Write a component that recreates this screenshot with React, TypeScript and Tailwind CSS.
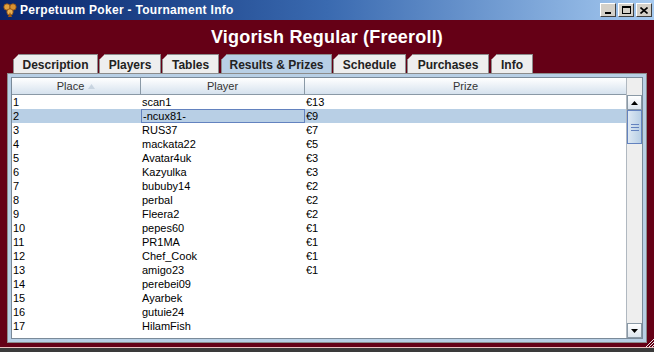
import { useState } from "react";

const results = [
    { place: "1", player: "scan1", prize: "€13" },
    { place: "2", player: "-ncux81-", prize: "€9" },
    { place: "3", player: "RUS37", prize: "€7" },
    { place: "4", player: "mackata22", prize: "€5" },
    { place: "5", player: "Avatar4uk", prize: "€3" },
    { place: "6", player: "Kazyulka", prize: "€3" },
    { place: "7", player: "bububy14", prize: "€2" },
    { place: "8", player: "perbal", prize: "€2" },
    { place: "9", player: "Fleera2", prize: "€2" },
    { place: "10", player: "pepes60", prize: "€1" },
    { place: "11", player: "PR1MA", prize: "€1" },
    { place: "12", player: "Chef_Cook", prize: "€1" },
    { place: "13", player: "amigo23", prize: "€1" },
    { place: "14", player: "perebei09", prize: "" },
    { place: "15", player: "Ayarbek", prize: "" },
    { place: "16", player: "gutuie24", prize: "" },
    { place: "17", player: "HilamFish", prize: "" },
];

const tabs = [
    { name: "Description", cls: "w-[85px] ml-[13px]" },
    { name: "Players", cls: "w-[62px] ml-[1px]" },
    { name: "Tables", cls: "w-[57px] ml-[1px]" },
    { name: "Results & Prizes", cls: "w-[111px] ml-[2px]" },
    { name: "Schedule", cls: "w-[73px] ml-[1px]" },
    { name: "Purchases", cls: "w-[82px] ml-[1px]" },
    { name: "Info", cls: "w-[42px] ml-[2px]" },
];

const App = () => {

    const [activeTab, setActiveTab] = useState("Results & Prizes");
    const [selected, setSelected] = useState(1);

    return (
        <div className="w-[654px] h-[352px] overflow-hidden flex flex-col bg-[#650016] font-['Liberation_Sans',Arial,sans-serif]">
            {/* title bar */}
            <div className="h-[20px] flex items-center bg-gradient-to-r from-[#0a246a] via-[#3a6ab0] to-[#a6caf0] pl-[2px] pr-[2px]">
                <svg width="16" height="16" viewBox="0 0 16 16" className="shrink-0">
                    <circle cx="5" cy="5" r="3.2" fill="#e0a040" stroke="#8a4a10" strokeWidth="0.8" />
                    <circle cx="11" cy="5" r="3.2" fill="#d89030" stroke="#8a4a10" strokeWidth="0.8" />
                    <circle cx="8" cy="10" r="3.2" fill="#e8b050" stroke="#8a4a10" strokeWidth="0.8" />
                    <path d="M8 10 L6 15 L10 15 Z" fill="#a05a10" />
                </svg>
                <span className="ml-[2px] text-white font-bold text-[12px] leading-none tracking-[0.3px]">
                    Perpetuum Poker - Tournament Info
                </span>
                <div className="ml-auto flex gap-[2px]">
                    <div className="w-[16px] h-[14px] bg-[#d4d0c8] border border-t-white border-l-white border-r-[#404040] border-b-[#404040] flex items-end justify-center pb-[2px]">
                        <div className="w-[6px] h-[2px] bg-black" />
                    </div>
                    <div className="w-[16px] h-[14px] bg-[#d4d0c8] border border-t-white border-l-white border-r-[#404040] border-b-[#404040] flex items-center justify-center">
                        <div className="w-[9px] h-[8px] border border-black border-t-2" />
                    </div>
                    <div className="w-[16px] h-[14px] bg-[#d4d0c8] border border-t-white border-l-white border-r-[#404040] border-b-[#404040] flex items-center justify-center">
                        <svg width="8" height="7" viewBox="0 0 8 7">
                            <path d="M0.5 0.5 L7.5 6.5 M7.5 0.5 L0.5 6.5" stroke="black" strokeWidth="1.6" />
                        </svg>
                    </div>
                </div>
            </div>

            {/* heading */}
            <div className="h-[34px] flex items-center justify-center">
                <h1 className="text-white font-bold text-[18px] leading-none tracking-[0.2px]">Vigorish Regular (Freeroll)</h1>
            </div>

            {/* tabs */}
            <div className="h-[19px] flex items-end">
                {tabs.map((t) => (
                    <button
                        key={t.name}
                        onClick={() => setActiveTab(t.name)}
                        className={`relative h-[19px] ${t.cls} text-[12px] font-bold text-[#222] leading-none pt-[1px] border border-b-0 border-[#8c8c8c] [clip-path:polygon(6px_0,100%_0,100%_100%,0_100%,0_6px)] ${activeTab === t.name ? "bg-[#b8cfe5]" : "bg-[#eeeeee]"}`}
                    >
                        {t.name}
                    </button>
                ))}
            </div>

            {/* content */}
            <div className="mx-[7px] h-[270px] bg-[#b8cfe5] border border-[#8c8c8c] p-[3px]">
                <div className="h-full flex bg-white border border-[#7a8a99]">
                    <div className="flex-1 flex flex-col">
                        <div className="h-[17px] flex text-[11px] text-[#333]">
                            <div className="w-[129px] flex items-center justify-center gap-[4px] bg-gradient-to-b from-white to-[#d6e2ee] border-r border-b border-[#8a99a6]">
                                Place
                                <svg width="7" height="5" viewBox="0 0 7 5"><path d="M0 5 L3.5 0 L7 5 Z" fill="#c8d4e0" /></svg>
                            </div>
                            <div className="w-[164px] flex items-center justify-center bg-gradient-to-b from-white to-[#d6e2ee] border-r border-b border-[#8a99a6]">Player</div>
                            <div className="flex-1 flex items-center justify-center bg-gradient-to-b from-white to-[#d6e2ee] border-b border-[#8a99a6]">Prize</div>
                        </div>
                        {results.map((r, i) => (
                            <div
                                key={r.place}
                                onClick={() => setSelected(i)}
                                className={`h-[14px] flex text-[11px] leading-[14px] text-black ${selected === i ? "bg-[#b8cfe5]" : ""}`}
                            >
                                <div className="w-[129px] pl-[1px]">{r.place}</div>
                                <div className={`w-[164px] pl-[1px] ${selected === i ? "border border-[#6382bf] leading-[12px]" : ""}`}>{r.player}</div>
                                <div className="flex-1 pl-[1px]">{r.prize}</div>
                            </div>
                        ))}
                    </div>

                    {/* scrollbar */}
                    <div className="w-[16px] flex flex-col bg-[#eeeeee] border-l border-[#b0b8c0]">
                        <div className="h-[17px] bg-[#eeeeee]" />
                        <div className="h-[15px] flex items-center justify-center bg-gradient-to-b from-white to-[#dde6ef] border border-[#8a99a6]">
                            <svg width="7" height="4" viewBox="0 0 7 4"><path d="M0 4 L3.5 0 L7 4 Z" fill="#000" /></svg>
                        </div>
                        <div className="h-[34px] flex flex-col items-center justify-center gap-[2px] bg-gradient-to-r from-[#dde8f3] to-[#b8cfe5] border border-[#6382bf]">
                            <div className="w-[8px] h-px bg-[#6382bf]" />
                            <div className="w-[8px] h-px bg-[#6382bf]" />
                            <div className="w-[8px] h-px bg-[#6382bf]" />
                        </div>
                        <div className="flex-1" />
                        <div className="h-[15px] flex items-center justify-center bg-gradient-to-b from-white to-[#dde6ef] border border-[#8a99a6]">
                            <svg width="7" height="4" viewBox="0 0 7 4"><path d="M0 0 L3.5 4 L7 0 Z" fill="#000" /></svg>
                        </div>
                    </div>
                </div>
            </div>

            {/* bottom edge */}
            <div className="h-[4px] flex justify-end">
                <svg width="10" height="10" viewBox="0 0 10 10" className="-mt-[6px]">
                    <path d="M2 10 L10 2 M5 10 L10 5 M8 10 L10 8" stroke="#e8e8e8" strokeWidth="1" />
                </svg>
            </div>
            <div className="h-px bg-[#e8c0c0]" />
            <div className="flex-1 bg-[#3a3a3a]" />
        </div>
    );
}

export default App;
